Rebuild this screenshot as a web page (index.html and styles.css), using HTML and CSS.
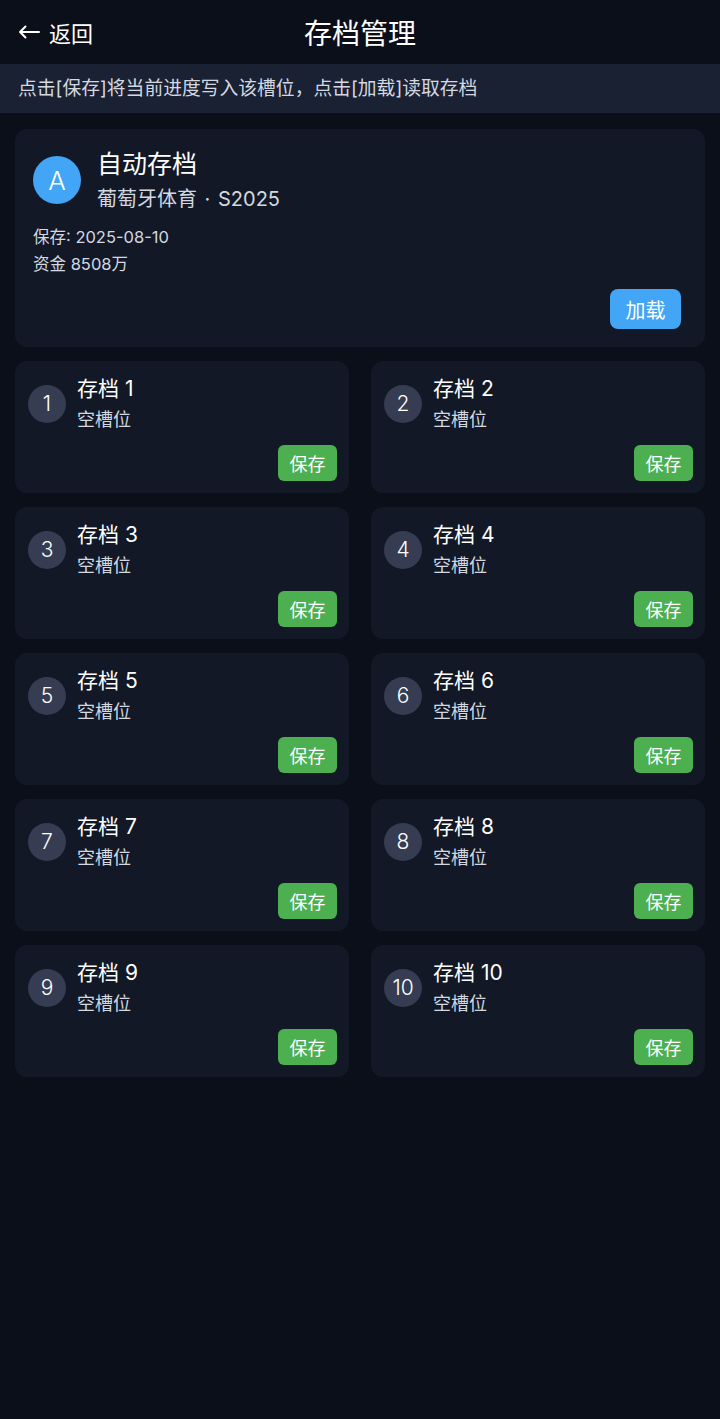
FILE: index.html
```html
<!DOCTYPE html>
<html lang="zh-CN">
<head>
  <meta charset="UTF-8" />
  <meta name="viewport" content="width=device-width, initial-scale=1" />
  <title>存档管理</title>
  <link rel="stylesheet" href="styles.css">
</head>
<body>
  <header class="topbar">
    <button class="back">
      <svg class="arrow" width="22" height="14" viewBox="0 0 22 14" fill="none" stroke="currentColor" stroke-width="2" stroke-linecap="round" stroke-linejoin="round"><path d="M21 7H2M7.5 1.5L2 7l5.5 5.5"/></svg>
      返回
    </button>
    <h1 class="title">存档管理</h1>
  </header>

  <div class="hint">点击[保存]将当前进度写入该槽位，点击[加载]读取存档</div>

  <main class="content">
    <section class="card auto">
      <div class="card-head">
        <div class="badge badge-blue">A</div>
        <div>
          <div class="auto-name">自动存档</div>
          <div class="auto-sub">葡萄牙体育 · S2025</div>
        </div>
      </div>
      <div class="meta">保存: 2025-08-10</div>
      <div class="meta meta-next">资金 8508万</div>
      <div class="actions">
        <button class="btn btn-load">加载</button>
      </div>
    </section>

    <div class="slots">
      <section class="card slot">
        <div class="card-head"><div class="badge">1</div><div><div class="slot-name">存档 1</div><div class="slot-sub">空槽位</div></div></div>
        <div class="actions"><button class="btn btn-save">保存</button></div>
      </section>
      <section class="card slot">
        <div class="card-head"><div class="badge">2</div><div><div class="slot-name">存档 2</div><div class="slot-sub">空槽位</div></div></div>
        <div class="actions"><button class="btn btn-save">保存</button></div>
      </section>
      <section class="card slot">
        <div class="card-head"><div class="badge">3</div><div><div class="slot-name">存档 3</div><div class="slot-sub">空槽位</div></div></div>
        <div class="actions"><button class="btn btn-save">保存</button></div>
      </section>
      <section class="card slot">
        <div class="card-head"><div class="badge">4</div><div><div class="slot-name">存档 4</div><div class="slot-sub">空槽位</div></div></div>
        <div class="actions"><button class="btn btn-save">保存</button></div>
      </section>
      <section class="card slot">
        <div class="card-head"><div class="badge">5</div><div><div class="slot-name">存档 5</div><div class="slot-sub">空槽位</div></div></div>
        <div class="actions"><button class="btn btn-save">保存</button></div>
      </section>
      <section class="card slot">
        <div class="card-head"><div class="badge">6</div><div><div class="slot-name">存档 6</div><div class="slot-sub">空槽位</div></div></div>
        <div class="actions"><button class="btn btn-save">保存</button></div>
      </section>
      <section class="card slot">
        <div class="card-head"><div class="badge">7</div><div><div class="slot-name">存档 7</div><div class="slot-sub">空槽位</div></div></div>
        <div class="actions"><button class="btn btn-save">保存</button></div>
      </section>
      <section class="card slot">
        <div class="card-head"><div class="badge">8</div><div><div class="slot-name">存档 8</div><div class="slot-sub">空槽位</div></div></div>
        <div class="actions"><button class="btn btn-save">保存</button></div>
      </section>
      <section class="card slot">
        <div class="card-head"><div class="badge">9</div><div><div class="slot-name">存档 9</div><div class="slot-sub">空槽位</div></div></div>
        <div class="actions"><button class="btn btn-save">保存</button></div>
      </section>
      <section class="card slot">
        <div class="card-head"><div class="badge">10</div><div><div class="slot-name">存档 10</div><div class="slot-sub">空槽位</div></div></div>
        <div class="actions"><button class="btn btn-save">保存</button></div>
      </section>
    </div>
  </main>
</body>
</html>
```

FILE: styles.css
```css
:root {
  --bg-color: #0b0f1a;
  --bar-bg: #1a2133;
  --card-bg: #121826;
  --badge-bg: #363d52;
  --text-color: #ffffff;
  --sub-color: #d4d8e0;
  --blue: #42a5f5;
  --green: #4caf50;
}

body {
  margin: 0;
  min-height: 100vh;
  background: var(--bg-color);
  color: var(--text-color);
  font-family: Inter, "Noto Sans CJK SC", sans-serif;
}

button {
  font-family: inherit;
  border: none;
  cursor: pointer;
}

.topbar {
  position: relative;
  height: 64px;
  display: flex;
  align-items: center;
  justify-content: center;
}
.back {
  position: absolute;
  left: 18px;
  top: 50%;
  transform: translateY(-50%);
  display: flex;
  align-items: center;
  gap: 9px;
  background: none;
  color: var(--text-color);
  font-size: 22px;
  padding: 0;
}
.title {
  margin: 0;
  font-size: 28px;
  font-weight: 400;
}

.hint {
  background: var(--bar-bg);
  height: 49px;
  line-height: 49px;
  padding: 0 18px;
  font-size: 18.8px;
  color: var(--sub-color);
}

.content {
  padding: 16px 15px;
  display: flex;
  flex-direction: column;
  gap: 14px;
}

.card {
  background: var(--card-bg);
  border-radius: 12px;
}
.card-head {
  display: flex;
  align-items: center;
}
.badge {
  flex-shrink: 0;
  border-radius: 50%;
  display: flex;
  align-items: center;
  justify-content: center;
  background: var(--badge-bg);
  font-weight: 300;
}
.actions {
  display: flex;
  justify-content: flex-end;
}
.btn {
  color: var(--text-color);
}

.auto {
  padding: 18px 24px 18px 18px;
}
.auto .badge {
  width: 48px;
  height: 48px;
  margin-right: 16px;
  font-size: 26px;
}
.badge-blue {
  background: var(--blue);
}
.auto-name {
  font-size: 25px;
  line-height: 34px;
}
.auto-sub {
  margin-top: 4px;
  font-size: 20px;
  line-height: 28px;
  word-spacing: 2px;
  color: var(--sub-color);
}
.meta {
  margin-top: 12px;
  font-size: 16.5px;
  line-height: 24px;
  color: var(--sub-color);
}
.meta-next {
  margin-top: 3px;
}
.auto .actions {
  margin-top: 13px;
}
.btn-load {
  width: 71px;
  height: 40px;
  border-radius: 8px;
  background: var(--blue);
  font-size: 20px;
}

.slots {
  display: grid;
  grid-template-columns: 1fr 1fr;
  column-gap: 22px;
  row-gap: 14px;
}
.slot {
  padding: 14px 12px 12px 13px;
}
.slot .badge {
  width: 38px;
  height: 38px;
  margin-right: 11px;
  font-size: 21px;
}
.slot-name {
  font-size: 21px;
  line-height: 28px;
}
.slot-sub {
  margin-top: 4px;
  font-size: 18px;
  line-height: 25px;
  color: var(--sub-color);
}
.slot .actions {
  margin-top: 13px;
}
.btn-save {
  width: 59px;
  height: 36px;
  border-radius: 6px;
  background: var(--green);
  font-size: 18px;
}
```
